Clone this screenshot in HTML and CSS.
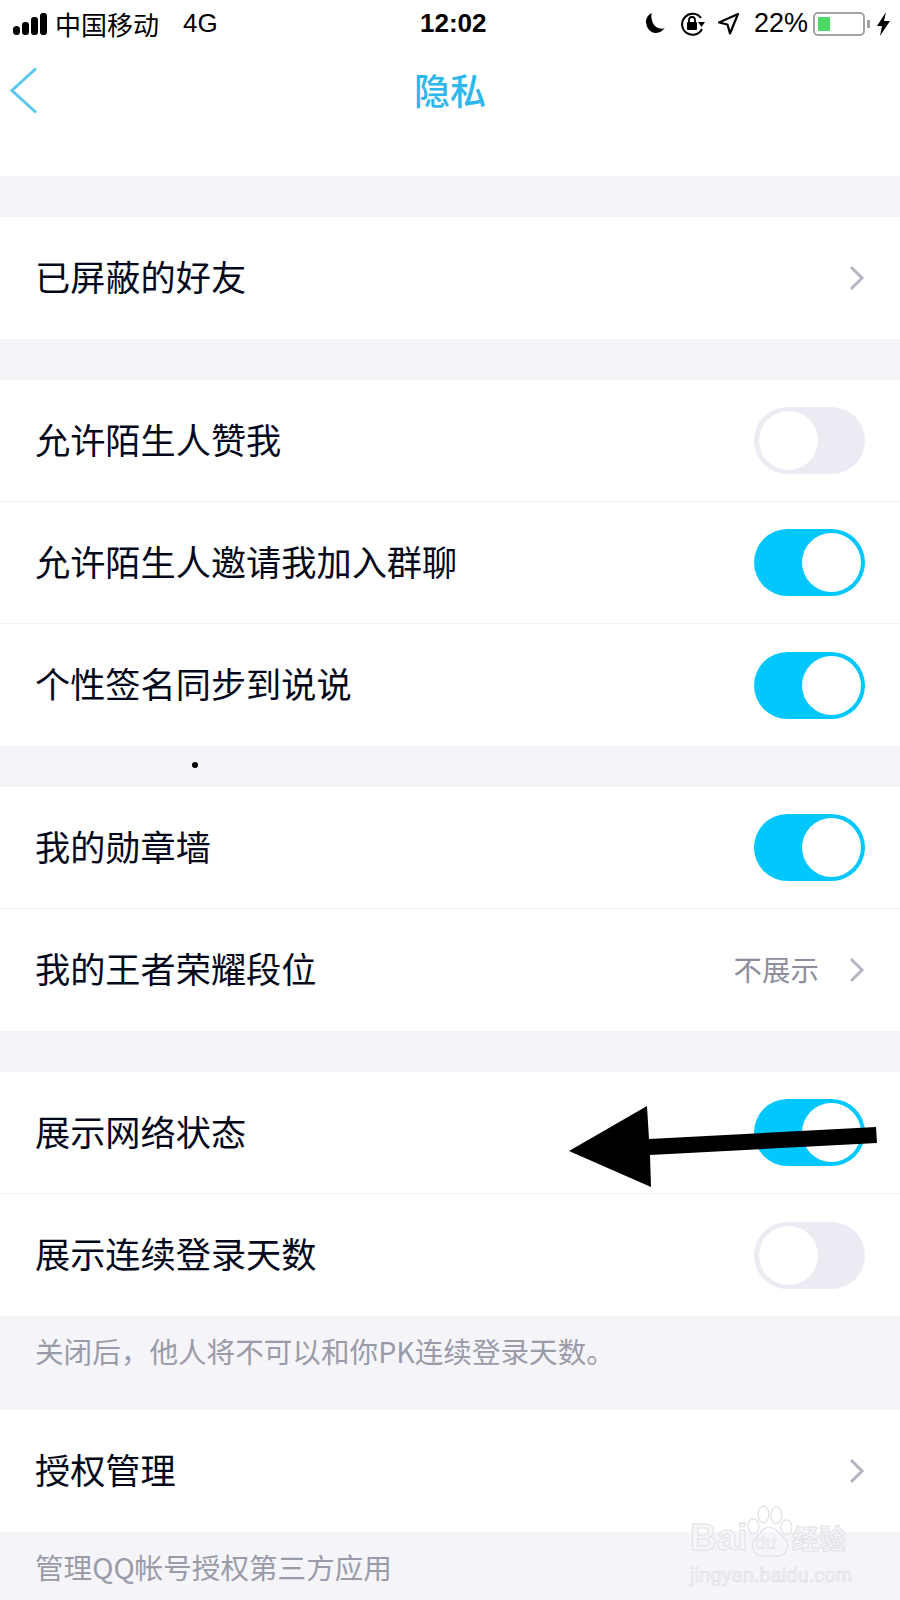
FILE: index.html
```html
<!DOCTYPE html>
<html lang="zh-CN">
<head>
<meta charset="UTF-8">
<meta name="viewport" content="width=device-width, initial-scale=1.0">
<title>隐私</title>
<link rel="stylesheet" href="styles.css">
</head>
<body>
<div class="screen">
    <div class="status-bar">
        <div class="status-left">
            <svg class="signal" width="35" height="22" viewBox="0 0 35 22">
                <rect x="0" y="13" width="7" height="9" rx="3.500"/>
                <rect x="9" y="9" width="7" height="13" rx="3"/>
                <rect x="18" y="4" width="7" height="18" rx="3"/>
                <rect x="27" y="0" width="7" height="22" rx="3"/>
            </svg>
            <span class="carrier">中国移动</span>
            <span class="network">4G</span>
        </div>
        <div class="status-time">12:02</div>
        <div class="status-right">
            <svg class="moon" width="22" height="24" viewBox="0 0 20 22">
                <path d="M7 1C3 3 1 7 2 11c1 5 5 9 10 8 3 0 5-2 7-4-5 1-9-1-11-5C7 7 6 4 7 1z"/>
            </svg>
            <svg class="lock" width="26" height="24" viewBox="0 0 26 24">
                <path d="M21 6A10.500 10.500 0 1 0 22 17" fill="none" stroke="#000" stroke-width="2"/>
                <path d="M18 10h7l-3.500 5z"/>
                <rect x="7" y="10" width="10" height="8" rx="1"/>
                <path d="M9 10V8a3 3 0 0 1 6 0v2" fill="none" stroke="#000" stroke-width="1.800"/>
            </svg>
            <svg class="location" width="21" height="22" viewBox="0 0 21 22">
                <path d="M20 1L1 9.500l8.500 2 2.500 9z" fill="none" stroke="#000" stroke-width="2.200" stroke-linejoin="round"/>
            </svg>
            <span class="battery-pct">22%</span>
            <div class="battery"><div class="battery-level"></div></div>
            <div class="battery-nub"></div>
            <svg class="bolt" width="13" height="24" viewBox="0 0 13 24">
                <path d="M9 0L0 14h5l-2 10 10-15H7z"/>
            </svg>
        </div>
    </div>

    <div class="nav-bar">
        <svg class="nav-back" width="28" height="47" viewBox="0 0 28 47">
            <path d="M26 1.500L2 23.500l24 22" fill="none" stroke="#5cc8ef" stroke-width="3"/>
        </svg>
        <div class="nav-title">隐私</div>
    </div>

    <div class="gap"></div>
    <div class="group">
        <div class="row">
            <span class="row-label">已屏蔽的好友</span>
            <svg class="chevron" width="16" height="26" viewBox="0 0 16 26"><path d="M2 2l11 11L2 24"/></svg>
        </div>
    </div>

    <div class="gap"></div>
    <div class="group">
        <div class="row">
            <span class="row-label">允许陌生人赞我</span>
            <div class="switch"><div class="knob"></div></div>
        </div>
        <div class="row">
            <span class="row-label">允许陌生人邀请我加入群聊</span>
            <div class="switch on"><div class="knob"></div></div>
        </div>
        <div class="row">
            <span class="row-label">个性签名同步到说说</span>
            <div class="switch on"><div class="knob"></div></div>
        </div>
    </div>

    <div class="gap"></div>
    <div class="group">
        <div class="row">
            <span class="row-label">我的勋章墙</span>
            <div class="switch on"><div class="knob"></div></div>
        </div>
        <div class="row">
            <span class="row-label">我的王者荣耀段位</span>
            <span class="row-value">不展示</span>
            <svg class="chevron" width="16" height="26" viewBox="0 0 16 26"><path d="M2 2l11 11L2 24"/></svg>
        </div>
    </div>

    <div class="gap"></div>
    <div class="group">
        <div class="row">
            <span class="row-label">展示网络状态</span>
            <div class="switch on"><div class="knob"></div></div>
        </div>
        <div class="row">
            <span class="row-label">展示连续登录天数</span>
            <div class="switch"><div class="knob"></div></div>
        </div>
    </div>
    <div class="note">关闭后，他人将不可以和你PK连续登录天数。</div>

    <div class="group">
        <div class="row">
            <span class="row-label">授权管理</span>
            <svg class="chevron" width="16" height="26" viewBox="0 0 16 26"><path d="M2 2l11 11L2 24"/></svg>
        </div>
    </div>
    <div class="note last">管理QQ帐号授权第三方应用</div>

    <!-- annotations drawn on top of the screenshot -->
    <div class="dot"></div>
    <svg class="arrow" width="320" height="90" viewBox="0 0 320 90">
        <path d="M0 46L78 1l2 33 227-12 1 16-227 12 1 32z"/>
    </svg>
    <div class="watermark">
        <div class="wm-logo">
            <span class="wm-bai">Bai</span>
            <svg class="wm-paw" width="46" height="54" viewBox="0 0 50 58" preserveAspectRatio="none">
                <g fill="none" stroke="#e4e4e8" stroke-width="1.500">
                    <ellipse cx="8" cy="23" rx="6" ry="8"/>
                    <ellipse cx="19" cy="10" rx="6" ry="9"/>
                    <ellipse cx="33" cy="11" rx="6" ry="9"/>
                    <ellipse cx="44" cy="24" rx="6" ry="8"/>
                    <path d="M25 24c-8 0-10 8-15 12-6 5-3 19 8 19h16c11 0 14-14 8-19-5-4-9-12-17-12z"/>
                </g>
            </svg>
            <span class="wm-du">du</span>
            <span class="wm-cn">经验</span>
        </div>
        <div class="wm-url">jingyan.baidu.com</div>
    </div>
</div>
</body>
</html>
```

FILE: styles.css
```css
/* Basic styling */
body {
    margin: 0;
    padding: 0;
    background-color: #fff;
    font-family: "Noto Sans CJK SC", "Liberation Sans", sans-serif;
}
.screen {
    position: relative;
    width: 900px;
    height: 1600px;
    overflow: hidden;
    background-color: #f5f5f9;
}

/* Status bar */
.status-bar {
    display: flex;
    align-items: center;
    justify-content: space-between;
    height: 47px;
    padding: 0 10px 0 13px;
    background-color: #fff;
    color: #000;
    position: relative;
}
.status-left, .status-right {
    display: flex;
    align-items: center;
}
.signal {
    margin-right: 7px;
}
.carrier {
    font-size: 26px;
    line-height: 47px;
    padding-bottom: 5px;
    height: 42px;
}
.network {
    margin-left: 24px;
    font-family: "Liberation Sans", sans-serif;
    font-size: 26px;
}
.status-time {
    position: absolute;
    left: 420px;
    font-family: "Liberation Sans", sans-serif;
    font-size: 26px;
    font-weight: 700;
}
.moon {
    margin-right: 14px;
}
.lock {
    margin-right: 12px;
}
.location {
    margin-right: 15px;
}
.battery-pct {
    font-family: "Liberation Sans", sans-serif;
    font-size: 27px;
    margin-right: 5px;
}
.battery {
    width: 52px;
    height: 24px;
    box-sizing: border-box;
    padding: 3px;
    border: 2px solid #a3a3a3;
    border-radius: 5px;
}
.battery-level {
    width: 12px;
    height: 100%;
    background-color: #4cd964;
    border-radius: 1px;
}
.battery-nub {
    width: 3px;
    height: 8px;
    margin: 0 7px 0 2px;
    background-color: #a3a3a3;
}

/* Navigation */
.nav-bar {
    display: flex;
    align-items: center;
    justify-content: center;
    position: relative;
    height: 129px;
    padding-bottom: 46px;
    box-sizing: border-box;
    background-color: #fff;
}
.nav-back {
    position: absolute;
    left: 10px;
    top: 20px;
}
.nav-title {
    font-size: 36px;
    font-weight: 500;
    color: #2db7ec;
}

/* Settings list */
.gap {
    height: 41px;
}
.group {
    background-color: #fff;
}
.row {
    display: flex;
    align-items: center;
    height: 122px;
    padding: 0 35px;
    box-sizing: border-box;
    border-bottom: 1px solid #f1f1f4;
}
.row:last-child {
    border-bottom: none;
}
.row-label {
    flex: 1;
    padding-bottom: 5px;
    font-size: 35.200px;
    color: #03081a;
}
.row-value {
    margin-right: 30px;
    padding-bottom: 4px;
    font-size: 28.500px;
    color: #8e8e9c;
}
.chevron {
    fill: none;
    stroke: #b4b5c2;
    stroke-width: 3;
}
.note {
    height: 94px;
    padding: 15px 35px 0;
    box-sizing: border-box;
    font-size: 28.600px;
    line-height: 40px;
    color: #9a9ba8;
}
.note.last {
    height: 68px;
}

/* Switches */
.switch {
    position: relative;
    width: 111px;
    height: 67px;
    border-radius: 34px;
    background-color: #ebebf4;
}
.knob {
    position: absolute;
    top: 4px;
    left: 4.500px;
    width: 59px;
    height: 59px;
    border-radius: 50%;
    background-color: #fff;
}
.switch.on {
    background-color: #00c8ff;
}
.switch.on .knob {
    left: 47.500px;
}

/* Annotations */
.dot {
    position: absolute;
    left: 192px;
    top: 762px;
    width: 6px;
    height: 6px;
    border-radius: 50%;
    background-color: #000;
}
.arrow {
    position: absolute;
    left: 569px;
    top: 1105px;
}
.watermark {
    position: absolute;
    left: 690px;
    top: 1501px;
    width: 200px;
    color: #f6f6f8;
    -webkit-text-stroke: 1px #e2e2e6;
}
.wm-logo {
    display: flex;
    align-items: flex-end;
    position: relative;
    height: 58px;
}
.wm-bai {
    font-family: "Liberation Sans", sans-serif;
    font-size: 37px;
    font-weight: 700;
    line-height: 42px;
    width: 56px;
}
.wm-paw {
    flex: none;
}
.wm-du {
    position: absolute;
    left: 65px;
    bottom: 5px;
    font-family: "Liberation Sans", sans-serif;
    font-size: 19px;
    -webkit-text-stroke: 0.600px #e2e2e6;
}
.wm-cn {
    margin-left: 0;
    font-size: 27px;
    line-height: 42px;
    font-weight: 700;
}
.wm-url {
    margin-top: 5px;
    font-family: "Liberation Sans", sans-serif;
    font-size: 19.500px;
    letter-spacing: 0.300px;
    color: #f5f5f9;
    -webkit-text-stroke: 0.700px #dedee3;
}
```
